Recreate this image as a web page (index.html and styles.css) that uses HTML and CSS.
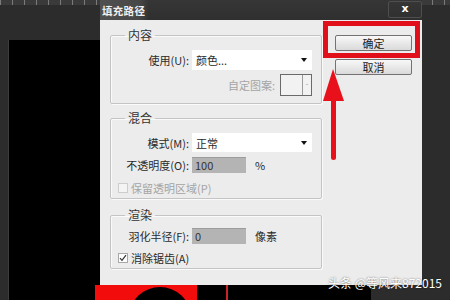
FILE: index.html
```html
<!DOCTYPE html>
<html lang="zh">
<head>
<meta charset="utf-8">
<title>填充路径</title>
<link rel="stylesheet" href="styles.css">
</head>
<body>
<div class="ruler"></div>
<div class="canvas"></div>
<svg class="redshape" width="140" height="15" viewBox="0 0 140 15">
  <rect x="0" y="0" width="102" height="15" fill="#f20c0c"/>
  <ellipse cx="65" cy="30" rx="30" ry="28" fill="#000"/>
  <rect x="131" y="0" width="2" height="15" fill="#c8232a"/>
</svg>

<div class="dialog">
  <div class="titlebar">
    <span class="title">填充路径</span>
    <span class="close">x</span>
  </div>
  <div class="body">
    <div class="groups">
      <fieldset class="group g1">
        <legend>内容</legend>
        <div class="inner pt8">
          <div class="row">
            <span class="label">使用(U):</span>
            <div class="select"><span>颜色...</span><span class="caret"></span></div>
          </div>
          <div class="row pattern-row">
            <span class="label-dis">自定图案:</span>
            <div class="pattern"><span class="pat-main"></span><span class="pat-side">-</span></div>
          </div>
        </div>
      </fieldset>

      <fieldset class="group g2">
        <legend>混合</legend>
        <div class="inner pt8">
          <div class="row">
            <span class="label">模式(M):</span>
            <div class="select sel2"><span>正常</span><span class="caret"></span></div>
          </div>
          <div class="row mt5">
            <span class="label">不透明度(O):</span>
            <div class="input">100</div>
            <span class="unit">%</span>
          </div>
          <div class="row check-row mt7">
            <span class="checkbox dis"></span>
            <span class="label-dis">保留透明区域(P)</span>
          </div>
        </div>
      </fieldset>

      <fieldset class="group g3">
        <legend>渲染</legend>
        <div class="inner pt6">
          <div class="row">
            <span class="label">羽化半径(F):</span>
            <div class="input">0</div>
            <span class="unit">像素</span>
          </div>
          <div class="row check-row mt6">
            <span class="checkbox"><svg width="8" height="8" viewBox="0 0 8 8"><path d="M1 4.2 L3 6.3 L7 1.2" fill="none" stroke="#333" stroke-width="1.2"/></svg></span>
            <span class="label-cb">消除锯齿(A)</span>
          </div>
        </div>
      </fieldset>
    </div>

    <div class="buttons">
      <div class="btn">确定</div>
      <div class="btn">取消</div>
    </div>
  </div>

  <div class="highlight"></div>
  <svg class="arrow" width="28" height="98" viewBox="0 0 28 98">
    <polygon points="13,3 3,35 24,35" fill="#e8101b"/>
    <rect x="11" y="30" width="5" height="64" rx="2.5" fill="#e8101b"/>
  </svg>
</div>

<div class="watermark">头条 @等风来872015</div>
</body>
</html>
```

FILE: styles.css
```css
html, body {
  margin: 0;
  padding: 0;
}

body {
  width: 450px;
  height: 300px;
  background: #2c2c2c;
  position: relative;
  overflow: hidden;
  font-family: "Noto Sans CJK SC", "Noto Sans", sans-serif;
}

.ruler {
  height: 5px;
  background:
    repeating-linear-gradient(90deg, #7a7a7a 0 1px, transparent 1px 12px),
    #3a3a3a;
}

.canvas {
  position: absolute;
  left: 8px;
  top: 40px;
  width: 362px;
  height: 260px;
  background: #000;
  border-left: 1px solid #3c3c3c;
}

.redshape {
  position: absolute;
  left: 95px;
  top: 285px;
}

.dialog {
  position: absolute;
  left: 100px;
  top: 0;
  width: 322px;
  height: 285px;
}

.titlebar {
  height: 20px;
  display: flex;
  justify-content: space-between;
  align-items: flex-start;
  background: linear-gradient(#363636, #2f2f2f);
}

.title {
  height: 20px;
  line-height: 22px;
  padding: 0 4px 0 2px;
  font-size: 10.5px;
  font-weight: bold;
  color: #f0f0f0;
  letter-spacing: 0.3px;
  background: linear-gradient(90deg, #505050 0%, #474747 80%, rgba(60,60,60,0) 100%);
}

.close {
  margin-top: 1px;
  width: 32px;
  height: 15px;
  border: 1px solid #4e4e4e;
  border-radius: 2px;
  color: #fff;
  font-family: "DejaVu Sans", sans-serif;
  font-size: 11px;
  font-weight: bold;
  line-height: 13px;
  text-align: center;
}

.body {
  height: 265px;
  background: #ececec;
  display: flex;
  padding-left: 10px;
  box-sizing: border-box;
}

.groups {
  width: 212px;
  display: flex;
  flex-direction: column;
}

.group {
  margin: 0;
  padding: 0;
  min-width: 0;
  border: 1px solid #c4c4c4;
  border-radius: 2px;
  box-shadow: inset 1px 1px 0 #fafafa, 1px 1px 0 #fafafa;
  box-sizing: border-box;
}

.group legend {
  margin-left: 14px;
  padding: 0 3px;
  font-size: 12px;
  line-height: 14px;
  color: #333;
}

.g1 { margin-top: 8px; height: 76px; }
.g2 { margin-top: 7px; height: 88px; }
.g3 { margin-top: 9px; height: 61px; }

.pt8 { padding-top: 8px; }
.pt6 { padding-top: 6px; }
.mt5 { margin-top: 5px; }
.mt6 { margin-top: 6px; }
.mt7 { margin-top: 7px; }

.row {
  display: flex;
  align-items: center;
  font-size: 11px;
  color: #2a2a2a;
}

.label {
  width: 78px;
  margin-right: 3px;
  text-align: right;
  white-space: nowrap;
}

.select {
  width: 120px;
  height: 20px;
  background: #fff;
  display: flex;
  align-items: center;
  padding: 0 5px 0 4px;
  box-sizing: border-box;
}

.sel2 {
  height: 19px;
}

.caret {
  margin-left: auto;
  width: 0;
  height: 0;
  border-left: 3.5px solid transparent;
  border-right: 3.5px solid transparent;
  border-top: 4px solid #111;
}

.pattern-row {
  margin-top: 4px;
  margin-left: 81px;
  width: 120px;
  justify-content: flex-end;
}

.label-dis {
  color: #a4a4a4;
  white-space: nowrap;
}

.pattern-row .label-dis {
  margin-right: 5px;
}

.pattern {
  width: 32px;
  height: 22px;
  border: 1px solid #6a6a6a;
  box-sizing: border-box;
  display: flex;
  background: #f2f2f2;
}

.pat-main {
  flex: 1;
}

.pat-side {
  width: 8px;
  border-left: 1px solid #9a9a9a;
  color: #a0a0a0;
  font-size: 8px;
  line-height: 18px;
  text-align: center;
}

.input {
  width: 54px;
  height: 16px;
  background: #b4b4b4;
  border-top: 1px solid #9c9c9c;
  box-sizing: border-box;
  padding-left: 3px;
  line-height: 15px;
  color: #333;
}

.unit {
  margin-left: 9px;
}

.check-row {
  padding-left: 7px;
}

.checkbox {
  width: 10px;
  height: 10px;
  border: 1px solid #a8a8a8;
  background: #fdfdfd;
  box-sizing: border-box;
  margin-right: 3px;
  display: flex;
  align-items: center;
  justify-content: center;
}

.checkbox.dis {
  border-color: #cdcdcd;
  background: #f4f4f4;
}

.label-cb {
  color: #2a2a2a;
}

.buttons {
  margin-left: 13px;
  padding-top: 15px;
  display: flex;
  flex-direction: column;
  gap: 8px;
}

.btn {
  width: 77px;
  height: 16px;
  border: 1px solid #737373;
  border-radius: 2px;
  box-sizing: border-box;
  background: linear-gradient(#f8f8f8, #dadada);
  font-size: 11px;
  line-height: 14px;
  text-align: center;
  color: #222;
}

.highlight {
  position: absolute;
  left: 223px;
  top: 21px;
  width: 97px;
  height: 37px;
  border: 5px solid #e00f19;
  box-sizing: border-box;
}

.arrow {
  position: absolute;
  left: 220px;
  top: 66px;
}

.watermark {
  position: absolute;
  left: 328px;
  top: 276px;
  font-size: 12px;
  line-height: 14px;
  color: #fff;
  white-space: nowrap;
  text-shadow: 0 0 2px rgba(0,0,0,0.6);
}
```
